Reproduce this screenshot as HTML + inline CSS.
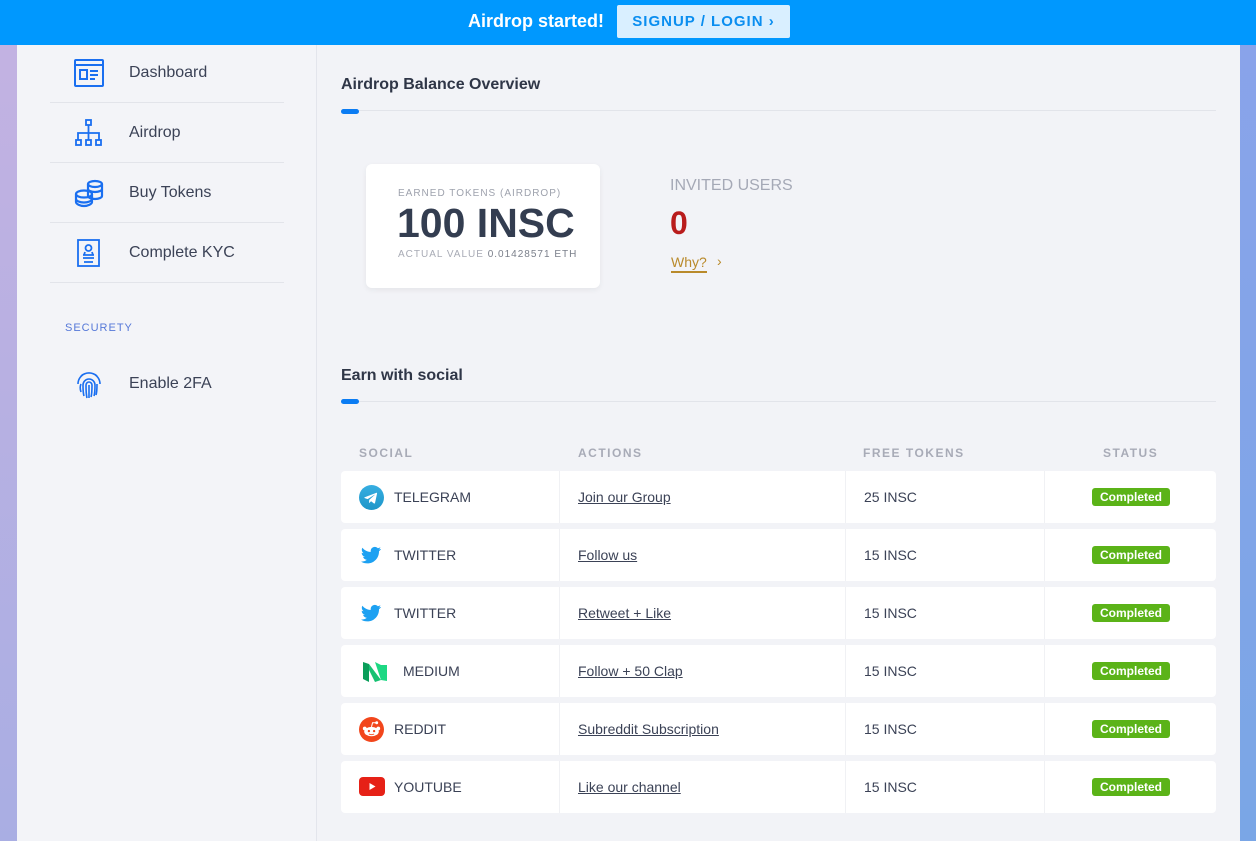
<!DOCTYPE html>
<html><head><meta charset="utf-8"><style>
*{box-sizing:border-box;margin:0;padding:0}
body{width:1256px;height:841px;overflow:hidden;font-family:"Liberation Sans",sans-serif;background:linear-gradient(180deg,#c4b2e2,#a9aee3);position:relative}
.rightbg{position:absolute;right:0;top:0;width:16px;height:841px;background:linear-gradient(180deg,#8aa3ea,#7aa6e6)}
.top{position:absolute;left:0;top:0;width:1256px;height:45px;background:#0098fe;z-index:3}
.top .t{position:absolute;left:468px;top:11px;color:#fff;font-weight:bold;font-size:18px}
.top .b{position:absolute;left:617px;top:5px;width:173px;height:33px;background:#d9efff;border-radius:2px;color:#0a8ef0;font-weight:bold;font-size:15px;letter-spacing:1px;line-height:33px;text-align:center}
.side{position:absolute;left:17px;top:45px;width:300px;height:796px;background:#f3f4f8;border-right:1px solid #e3e5ec}
.main{position:absolute;left:317px;top:45px;width:923px;height:796px;background:#f2f3f7}
.nav{position:absolute;left:33px;width:234px;height:60px;border-bottom:1px solid #e2e4ea}
.nav span{position:absolute;left:79px;top:21px;font-size:16px;color:#3b4256}
.nav svg{position:absolute;left:23px;top:16px}
.h{position:absolute;left:24px;font-size:16px;font-weight:bold;color:#2f3647}
.line{position:absolute;left:24px;width:875px;height:1px;background:#e2e4ea}
.acc{position:absolute;left:24px;width:18px;height:5px;border-radius:3px;background:#0b7cf3}
.card{position:absolute;left:49px;top:119px;width:234px;height:124px;background:#fff;border-radius:6px;box-shadow:0 2px 6px rgba(0,0,0,.06)}
.th{position:absolute;top:401px;font-size:12px;font-weight:bold;letter-spacing:1.5px;color:#a8abb7}
.row{position:absolute;left:24px;width:875px;height:52px;background:#fff;border-radius:4px}
.row div{position:absolute;top:0;height:52px;line-height:52px;font-size:14px;color:#3b4256}
.c1{left:0;width:218px}.c2{left:218px;width:286px;border-left:1px solid #f0f1f4}.c3{left:504px;width:199px;border-left:1px solid #f0f1f4}.c4{left:703px;width:172px;border-left:1px solid #f0f1f4}
.c2 u{margin-left:18px;text-decoration:underline;color:#3b4256}
.c3 span{margin-left:18px}
.badge{position:absolute;left:47px;top:17px;height:18px;width:78px;line-height:18px;text-align:center;background:#5bb318;color:#fff;font-weight:bold;font-size:12px;border-radius:3px}
.ic{position:absolute;left:18px;top:14px}
.nm{position:absolute;left:53px}
</style></head><body>
<div class="rightbg"></div>
<div class="top"><div class="t">Airdrop started!</div><div class="b">SIGNUP / LOGIN ›</div></div>
<div class="side">
 <div class="nav" style="top:-2px"><svg width="32" height="30" viewBox="0 0 32 30" fill="none" stroke="#1a6ff0" stroke-width="2"><rect x="2" y="1" width="28" height="26" rx="1"/><line x1="2" y1="6" x2="30" y2="6"/><rect x="7" y="11" width="7" height="9"/><line x1="17" y1="12" x2="25" y2="12"/><line x1="17" y1="16" x2="25" y2="16"/><line x1="17" y1="20" x2="22" y2="20"/></svg><span>Dashboard</span></div>
 <div class="nav" style="top:58px"><svg width="32" height="30" viewBox="0 0 32 30" fill="none" stroke="#1a6ff0" stroke-width="1.8"><rect x="13" y="1" width="5" height="5"/><line x1="15.5" y1="6" x2="15.5" y2="14"/><path d="M5 21V14H26V21"/><line x1="15.5" y1="14" x2="15.5" y2="21"/><rect x="3" y="21" width="5" height="5"/><rect x="13" y="21" width="5" height="5"/><rect x="23" y="21" width="5" height="5"/></svg><span>Airdrop</span></div>
 <div class="nav" style="top:118px"><svg width="32" height="30" viewBox="0 0 32 30" fill="none" stroke="#1a6ff0" stroke-width="2.2"><ellipse cx="22" cy="5" rx="7" ry="3"/><path d="M15 5v12c0 1.5 3 3 7 3s7-1.5 7-3V5M15 10c0 1.5 3 3 7 3s7-1.5 7-3"/><ellipse cx="11" cy="15" rx="8" ry="3.5"/><path d="M3 15v8c0 2 4 4 8 4s8-2 8-4v-8M3 20c0 2 4 3.5 8 3.5s8-1.5 8-3.5"/></svg><span>Buy Tokens</span></div>
 <div class="nav" style="top:178px"><svg width="32" height="30" viewBox="0 0 32 30" fill="none" stroke="#1a6ff0" stroke-width="1.8"><rect x="5" y="1" width="21" height="26"/><circle cx="15.5" cy="9" r="3"/><path d="M10 16h11M10 19h11M11 23h9M12 13l-1 3M19 13l1 3"/></svg><span>Complete KYC</span></div>
 <div style="position:absolute;left:48px;top:277px;font-size:11px;letter-spacing:1px;color:#5578d8">SECURETY</div>
 <div class="nav" style="top:309px;border:none"><svg width="32" height="30" viewBox="0 0 32 30" fill="none" stroke="#1a6ff0" stroke-width="1.6"><path d="M5 14a11 11 0 0 1 22 0M8 22c-1-3-1-6 0-8M24 14c0 4 0 8-1 11M11 26c-1-3-1-7-1-11a6 6 0 0 1 12 0c0 4 0 8-1 11M14 28c-1-4-1-8-1-13a3 3 0 0 1 6 0c0 5 0 9-1 12M16 15c0 5 0 9 0 13M8 6a12 12 0 0 1 16 0"/></svg><span>Enable 2FA</span></div>
</div>
<div class="main">
 <div class="h" style="top:31px">Airdrop Balance Overview</div>
 <div class="line" style="top:65px"></div><div class="acc" style="top:64px"></div>
 <div class="card">
  <div style="position:absolute;left:32px;top:24px;font-size:10px;letter-spacing:1px;color:#9ea2ad">EARNED TOKENS (AIRDROP)</div>
  <div style="position:absolute;left:31px;top:36px;font-size:41px;font-weight:bold;color:#333d50">100 INSC</div>
  <div style="position:absolute;left:32px;top:85px;font-size:10px;letter-spacing:1px;color:#a8abb5">ACTUAL VALUE <span style="color:#7a7f8a">0.01428571 ETH</span></div>
 </div>
 <div style="position:absolute;left:353px;top:132px;font-size:16px;color:#a5a9b6">INVITED USERS</div>
 <div style="position:absolute;left:353px;top:160px;font-size:32px;font-weight:bold;color:#b91c1c">0</div>
 <div style="position:absolute;left:354px;top:209px;font-size:14px;color:#b98a2b;border-bottom:2px solid #b98a2b;line-height:17px">Why?</div>
 <div style="position:absolute;left:400px;top:208px;font-size:14px;color:#b98a2b">›</div>
 <div class="h" style="top:322px">Earn with social</div>
 <div class="line" style="top:356px"></div><div class="acc" style="top:354px"></div>
 <div class="th" style="left:42px">SOCIAL</div><div class="th" style="left:261px">ACTIONS</div><div class="th" style="left:546px">FREE TOKENS</div><div class="th" style="left:786px">STATUS</div>

 <div class="row" style="top:426px"><div class="c1"><svg class="ic" width="25" height="25" viewBox="0 0 24 24"><defs><linearGradient id="tg" x1="0" y1="0" x2="0" y2="1"><stop offset="0" stop-color="#37aee2"/><stop offset="1" stop-color="#1e96c8"/></linearGradient></defs><circle cx="12" cy="12" r="12" fill="url(#tg)"/><path d="M5.5 11.8l11-4.3c.5-.2 1 .1.8.9l-1.9 8.8c-.1.6-.5.7-1 .5l-2.8-2.1-1.4 1.3c-.1.2-.3.3-.6.3l.2-2.9 5.2-4.7c.2-.2 0-.3-.3-.1l-6.4 4-2.8-.9c-.6-.2-.6-.6.1-.8z" fill="#fff"/></svg><span class="nm">TELEGRAM</span></div><div class="c2"><u>Join our Group</u></div><div class="c3"><span>25 INSC</span></div><div class="c4"><span class="badge">Completed</span></div></div>

 <div class="row" style="top:484px"><div class="c1"><svg class="ic" width="24" height="24" viewBox="0 0 24 24"><path fill="#1da1f2" d="M22 5.9c-.7.3-1.5.5-2.4.6.9-.5 1.5-1.3 1.8-2.3-.8.5-1.7.8-2.6 1-.8-.8-1.8-1.3-3-1.3-2.3 0-4.1 1.8-4.1 4.1 0 .3 0 .6.1.9C8.4 8.8 5.4 7.2 3.4 4.7c-.4.6-.6 1.3-.6 2.1 0 1.4.7 2.7 1.8 3.4-.7 0-1.3-.2-1.9-.5 0 2 1.4 3.7 3.3 4.1-.6.2-1.3.2-1.9.1.5 1.6 2 2.8 3.8 2.9-1.4 1.1-3.2 1.8-5.1 1.8H2c1.8 1.2 4 1.8 6.3 1.8 7.5 0 11.7-6.3 11.7-11.7v-.5c.8-.6 1.5-1.3 2-2.1z"/></svg><span class="nm">TWITTER</span></div><div class="c2"><u>Follow us</u></div><div class="c3"><span>15 INSC</span></div><div class="c4"><span class="badge">Completed</span></div></div>

 <div class="row" style="top:542px"><div class="c1"><svg class="ic" width="24" height="24" viewBox="0 0 24 24"><path fill="#1da1f2" d="M22 5.9c-.7.3-1.5.5-2.4.6.9-.5 1.5-1.3 1.8-2.3-.8.5-1.7.8-2.6 1-.8-.8-1.8-1.3-3-1.3-2.3 0-4.1 1.8-4.1 4.1 0 .3 0 .6.1.9C8.4 8.8 5.4 7.2 3.4 4.7c-.4.6-.6 1.3-.6 2.1 0 1.4.7 2.7 1.8 3.4-.7 0-1.3-.2-1.9-.5 0 2 1.4 3.7 3.3 4.1-.6.2-1.3.2-1.9.1.5 1.6 2 2.8 3.8 2.9-1.4 1.1-3.2 1.8-5.1 1.8H2c1.8 1.2 4 1.8 6.3 1.8 7.5 0 11.7-6.3 11.7-11.7v-.5c.8-.6 1.5-1.3 2-2.1z"/></svg><span class="nm">TWITTER</span></div><div class="c2"><u>Retweet + Like</u></div><div class="c3"><span>15 INSC</span></div><div class="c4"><span class="badge">Completed</span></div></div>

 <div class="row" style="top:600px"><div class="c1"><svg class="ic" width="28" height="26" viewBox="0 0 28 26" style="left:20px;top:13px"><path d="M2 4l6 2v18l-6-3z" fill="#0a9e5a"/><path d="M8 6l12 16-6 2L8 12z" fill="#16c172"/><path d="M14 4l6 3 6 0v16l-6-1z" fill="#1dd883"/></svg><span class="nm" style="left:62px">MEDIUM</span></div><div class="c2"><u>Follow + 50 Clap</u></div><div class="c3"><span>15 INSC</span></div><div class="c4"><span class="badge">Completed</span></div></div>

 <div class="row" style="top:658px"><div class="c1"><svg class="ic" width="25" height="25" viewBox="0 0 24 24"><circle cx="12" cy="12" r="12" fill="#f2461c"/><ellipse cx="12" cy="14" rx="7" ry="4.5" fill="#fff"/><circle cx="5.5" cy="11" r="1.8" fill="#fff"/><circle cx="18.5" cy="11" r="1.8" fill="#fff"/><circle cx="17" cy="5.5" r="1.4" fill="#fff"/><path d="M12 9.5l1-4 4 0" stroke="#fff" fill="none"/><circle cx="9.5" cy="13.5" r="1.1" fill="#f2461c"/><circle cx="14.5" cy="13.5" r="1.1" fill="#f2461c"/><path d="M9.5 16.3q2.5 1.3 5 0" stroke="#f2461c" fill="none" stroke-width=".8"/></svg><span class="nm">REDDIT</span></div><div class="c2"><u>Subreddit Subscription</u></div><div class="c3"><span>15 INSC</span></div><div class="c4"><span class="badge">Completed</span></div></div>

 <div class="row" style="top:716px"><div class="c1"><svg class="ic" width="26" height="20" viewBox="0 0 26 20" style="top:16px"><rect width="26" height="19" rx="4" fill="#e62117"/><path d="M10.5 6l6 3.5-6 3.5z" fill="#fff"/></svg><span class="nm">YOUTUBE</span></div><div class="c2"><u>Like our channel</u></div><div class="c3"><span>15 INSC</span></div><div class="c4"><span class="badge">Completed</span></div></div>
</div>
</body></html>
